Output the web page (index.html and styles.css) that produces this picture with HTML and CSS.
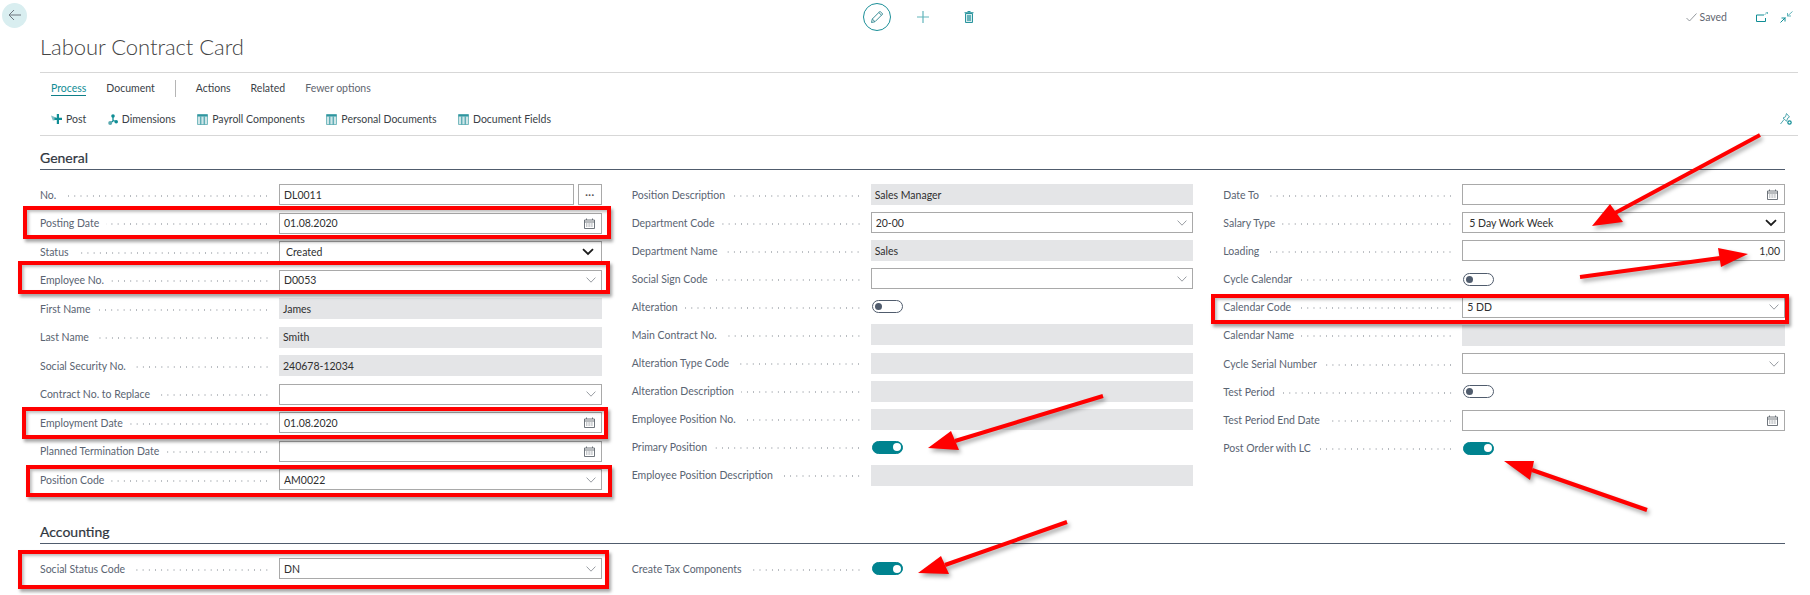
FILE: index.html
```html
<!DOCTYPE html>
<html lang="en">
<head>
  <meta charset="UTF-8">
  <title>Labour Contract Card</title>
  <link rel="stylesheet" href="styles.css">
</head>
<body>
  <!-- icon sprite -->
  <svg class="sprite" xmlns="http://www.w3.org/2000/svg">
    <symbol id="i-chevron" viewBox="0 0 10 6"><path d="M.6.6 5 5.200 9.400.6" fill="none" stroke="#8d9298" stroke-width=".9"/></symbol>
    <symbol id="i-select" viewBox="0 0 12 8"><path d="M1 1.200 6 6l5-4.800" fill="none" stroke="#1c1c1c" stroke-width="1.800"/></symbol>
    <symbol id="i-calendar" viewBox="0 0 11 11"><path d="M.5 2h10v8.500H.5zM.5 4h10M2.500.5V2M8.500.5V2" fill="none" stroke="#60666e" stroke-width=".9"/><path d="M2 6h7M2 8h7" stroke="#8d9298" stroke-width="1" stroke-dasharray="1 .6"/></symbol>
    <symbol id="i-table" viewBox="0 0 11 11"><path d="M.5.5h10v10H.5z" fill="#cfe6e8" stroke="#6db4ba" stroke-width=".9"/><path d="M.5 1.500h10" stroke="#2f96a0" stroke-width="2"/><path d="M3.800 2.500v8M7.200 2.500v8" stroke="#2f96a0" stroke-width="1"/></symbol>
    <symbol id="i-post" viewBox="0 0 11 10"><path d="M0 1.500 5 3.500v2.500L1.800 6.500z" fill="#7cbcc2"/><path d="M5.800 0h2.200v3.800H11V6H8v4H5.800V6H3.500V3.800h2.300z" fill="#0f8d95"/></symbol>
    <symbol id="i-dims" viewBox="0 0 10 11"><path d="M5 2v5L2.500 9M5 6.500 8.500 7.500" fill="none" stroke="#0f8d95" stroke-width="1.300"/><circle cx="5" cy="2" r="1.800" fill="#0f8d95"/><circle cx="2.200" cy="9" r="2" fill="#5aa9b0"/><circle cx="8.200" cy="7.800" r="1.800" fill="#0f8d95"/></symbol>
  </svg>

  <div class="page">
    <header class="topbar">
      <button class="back">
        <svg width="25" height="25" viewBox="0 0 25 25"><path d="M19 12H7M12 7l-5 5 5 5" fill="none" stroke="#6e767f" stroke-width="1"/></svg>
      </button>
      <div class="doc-actions">
        <span class="edit-btn">
          <svg width="14" height="14" viewBox="0 0 14 14"><path d="M1.500 12.500 2.300 9 10 1.300l2.700 2.700L5 11.700zM2.300 9 5 11.700M8.800 2.500l2.700 2.700" fill="none" stroke="#3a8d96" stroke-width="1"/></svg>
        </span>
        <svg class="new-btn" width="12" height="12" viewBox="0 0 12 12"><path d="M6 0v12M0 6h12" stroke="#62b5bb" stroke-width="1.200"/></svg>
        <svg class="del-btn" width="10" height="12" viewBox="0 0 10 12"><path d="M1.500 2.500h7V11.500h-7z" fill="#d6ecee" stroke="#2a959e"/><path d="M.5 1.700h9M3.500.5h3" stroke="#2a959e"/><path d="M4 4v6M6 4v6" stroke="#2a959e" stroke-width="1.300"/></svg>
      </div>
      <div class="status">
        <svg width="11" height="9" viewBox="0 0 11 9"><path d="M.5 5 3.500 8 10.500.5" fill="none" stroke="#7a8087" stroke-width=".8"/></svg>
        <span>Saved</span>
      </div>
      <svg class="popout" width="12" height="10" viewBox="0 0 12 10"><path d="M8 3H.5v6.500h9V6" fill="none" stroke="#0f8d95" stroke-width="1"/><path d="M8.500 3 11.500 0M9.500 0h2v2" fill="none" stroke="#62b5bb" stroke-width=".9"/></svg>
      <svg class="collapse" width="13" height="12" viewBox="0 0 13 12"><path d="M12.500.5 7.500 5M7.500 2v3h3.500" fill="none" stroke="#62b5bb" stroke-width="1"/><path d="M.5 11.500l5-5M1.500 7h3.500v3.500" fill="none" stroke="#0f8d95" stroke-width="1"/></svg>
    </header>

    <div class="content">
      <h1 class="title">Labour Contract Card</h1>

      <nav class="tabs">
        <a class="tab active">Process</a>
        <a class="tab">Document</a>
        <span class="tab-sep"></span>
        <a class="tab">Actions</a>
        <a class="tab">Related</a>
        <a class="tab muted">Fewer options</a>
      </nav>

      <div class="actions">
        <a class="action"><svg width="11" height="10"><use href="#i-post"/></svg>Post</a>
        <a class="action"><svg width="10" height="11"><use href="#i-dims"/></svg>Dimensions</a>
        <a class="action"><svg width="11" height="11"><use href="#i-table"/></svg>Payroll Components</a>
        <a class="action"><svg width="11" height="11"><use href="#i-table"/></svg>Personal Documents</a>
        <a class="action"><svg width="11" height="11"><use href="#i-table"/></svg>Document Fields</a>
        <svg class="pin" width="12" height="12" viewBox="0 0 12 12"><path d="M6.500.5 9.500 4 7.800 5 6.500 8.200 3 5 5.500 3.800zM4 6.500.5 11" fill="none" stroke="#3f9fa8" stroke-width=".9"/><circle cx="9.500" cy="9.500" r="1.700" fill="none" stroke="#0f8d95" stroke-width="1.200"/></svg>
      </div>

      <section class="section">
        <h2 class="section-title">General</h2>
        <div class="columns">
          <div class="col col-a">
            <div class="row"><div class="label"><span>No.</span><i></i></div><div class="field-group"><div class="value">DL0011</div><div class="more">···</div></div></div>
            <div class="row"><div class="label"><span>Posting Date</span><i></i></div><div class="value">01.08.2020<svg class="cal"><use href="#i-calendar"/></svg></div></div>
            <div class="row"><div class="label"><span>Status</span><i></i></div><div class="value pick">Created<svg class="sel"><use href="#i-select"/></svg></div></div>
            <div class="row"><div class="label"><span>Employee No.</span><i></i></div><div class="value">D0053<svg class="chev"><use href="#i-chevron"/></svg></div></div>
            <div class="row"><div class="label"><span>First Name</span><i></i></div><div class="value ro">James</div></div>
            <div class="row"><div class="label"><span>Last Name</span><i></i></div><div class="value ro">Smith</div></div>
            <div class="row"><div class="label"><span>Social Security No.</span><i></i></div><div class="value ro">240678-12034</div></div>
            <div class="row"><div class="label"><span>Contract No. to Replace</span><i></i></div><div class="value"><svg class="chev"><use href="#i-chevron"/></svg></div></div>
            <div class="row"><div class="label"><span>Employment Date</span><i></i></div><div class="value">01.08.2020<svg class="cal"><use href="#i-calendar"/></svg></div></div>
            <div class="row"><div class="label"><span>Planned Termination Date</span><i></i></div><div class="value"><svg class="cal"><use href="#i-calendar"/></svg></div></div>
            <div class="row"><div class="label"><span>Position Code</span><i></i></div><div class="value">AM0022<svg class="chev"><use href="#i-chevron"/></svg></div></div>
          </div>
          <div class="col col-b">
            <div class="row"><div class="label"><span>Position Description</span><i></i></div><div class="value ro">Sales Manager</div></div>
            <div class="row"><div class="label"><span>Department Code</span><i></i></div><div class="value">20-00<svg class="chev"><use href="#i-chevron"/></svg></div></div>
            <div class="row"><div class="label"><span>Department Name</span><i></i></div><div class="value ro">Sales</div></div>
            <div class="row"><div class="label"><span>Social Sign Code</span><i></i></div><div class="value"><svg class="chev"><use href="#i-chevron"/></svg></div></div>
            <div class="row"><div class="label"><span>Alteration</span><i></i></div><div class="switch"></div></div>
            <div class="row"><div class="label"><span>Main Contract No.</span><i></i></div><div class="value ro"></div></div>
            <div class="row"><div class="label"><span>Alteration Type Code</span><i></i></div><div class="value ro"></div></div>
            <div class="row"><div class="label"><span>Alteration Description</span><i></i></div><div class="value ro"></div></div>
            <div class="row"><div class="label"><span>Employee Position No.</span><i></i></div><div class="value ro"></div></div>
            <div class="row"><div class="label"><span>Primary Position</span><i></i></div><div class="switch on"></div></div>
            <div class="row"><div class="label"><span>Employee Position Description</span><i></i></div><div class="value ro"></div></div>
          </div>
          <div class="col col-c">
            <div class="row"><div class="label"><span>Date To</span><i></i></div><div class="value"><svg class="cal"><use href="#i-calendar"/></svg></div></div>
            <div class="row"><div class="label"><span>Salary Type</span><i></i></div><div class="value pick">5 Day Work Week<svg class="sel"><use href="#i-select"/></svg></div></div>
            <div class="row"><div class="label"><span>Loading</span><i></i></div><div class="value num">1,00</div></div>
            <div class="row"><div class="label"><span>Cycle Calendar</span><i></i></div><div class="switch"></div></div>
            <div class="row"><div class="label"><span>Calendar Code</span><i></i></div><div class="value">5 DD<svg class="chev"><use href="#i-chevron"/></svg></div></div>
            <div class="row"><div class="label"><span>Calendar Name</span><i></i></div><div class="value ro"></div></div>
            <div class="row"><div class="label"><span>Cycle Serial Number</span><i></i></div><div class="value"><svg class="chev"><use href="#i-chevron"/></svg></div></div>
            <div class="row"><div class="label"><span>Test Period</span><i></i></div><div class="switch"></div></div>
            <div class="row"><div class="label"><span>Test Period End Date</span><i></i></div><div class="value"><svg class="cal"><use href="#i-calendar"/></svg></div></div>
            <div class="row"><div class="label"><span>Post Order with LC</span><i></i></div><div class="switch on"></div></div>
          </div>
        </div>
      </section>

      <section class="section accounting">
        <h2 class="section-title">Accounting</h2>
        <div class="columns">
          <div class="col col-a">
            <div class="row"><div class="label"><span>Social Status Code</span><i></i></div><div class="value">DN<svg class="chev"><use href="#i-chevron"/></svg></div></div>
          </div>
          <div class="col col-b">
            <div class="row"><div class="label"><span>Create Tax Components</span><i></i></div><div class="switch on"></div></div>
          </div>
        </div>
      </section>
    </div>

    <!-- annotations drawn on top of the screenshot -->
    <div class="mark mark-posting"></div>
    <div class="mark mark-employee"></div>
    <div class="mark mark-employment"></div>
    <div class="mark mark-position"></div>
    <div class="mark mark-social"></div>
    <div class="mark mark-calendar"></div>

    <svg class="arrows" width="1810" height="595" viewBox="0 0 1810 595">
      <path d="M1760 135 1615 213" class="shaft"/>
      <path d="M1592 226 1610 204 1623 222z"/>
      <path d="M1580 277 1720 258" class="shaft"/>
      <path d="M1748 254 1718 248 1721 267z"/>
      <path d="M1103 396 955 441" class="shaft"/>
      <path d="M928 448 951 431 959 450z"/>
      <path d="M1067 522 945 565" class="shaft"/>
      <path d="M918 573 941 556 949 574z"/>
      <path d="M1647 510 1532 470" class="shaft"/>
      <path d="M1504 461 1534 461 1530 480z"/>
    </svg>
  </div>
</body>
</html>
```

FILE: styles.css
```css
* {
  box-sizing: border-box;
}

body {
  margin: 0;
  background-color: #fff;
  font-family: "Lato", "Open Sans", sans-serif;
  font-size: 10.5px;
  color: #3a3f47;
}

.sprite {
  display: none;
}

.page {
  position: relative;
  width: 1810px;
  height: 595px;
  overflow: hidden;
}

/* top bar */
.topbar {
  display: flex;
  align-items: center;
  height: 34px;
}

.back {
  width: 25px;
  height: 25px;
  margin: -3px 0 0 2px;
  padding: 0;
  border: none;
  border-radius: 50%;
  background-color: #d9eef0;
}

.back svg {
  display: block;
}

.doc-actions {
  display: flex;
  align-items: center;
  margin-left: 836px;
}

.edit-btn {
  display: flex;
  align-items: center;
  justify-content: center;
  width: 28px;
  height: 28px;
  border: 1px solid #1b8f98;
  border-radius: 50%;
}

.new-btn {
  margin-left: 26px;
}

.del-btn {
  margin-left: 35px;
}

.status {
  display: flex;
  align-items: center;
  gap: 3px;
  margin-left: auto;
  color: #5f6670;
}

.popout {
  margin-left: 29px;
}

.collapse {
  margin: 0 17px 0 12px;
}

/* title, tabs, actions */
.content {
  margin: 0 12px 0 40px;
}

.title {
  height: 39px;
  margin: 0;
  padding-top: 1px;
  border-bottom: 1px solid #d7d7d7;
  font-size: 22px;
  font-weight: 300;
  line-height: 24px;
  letter-spacing: -.05px;
  color: #444;
}

.tabs {
  display: flex;
  align-items: center;
  gap: 20px;
  height: 30px;
  padding-left: 11px;
}

.tab {
  display: block;
  height: 16px;
  line-height: 16px;
}

.tab.active {
  color: #0f8d95;
  border-bottom: 1px solid #0f7f88;
}

.tab.muted {
  color: #5f6670;
}

.tab-sep {
  width: 1px;
  height: 17px;
  background-color: #b5b5b5;
}

.actions {
  display: flex;
  align-items: center;
  gap: 21.500px;
  height: 33px;
  padding-left: 11px;
  border-bottom: 1px solid #d7d7d7;
}

.action {
  display: flex;
  align-items: center;
  gap: 4px;
}

.pin {
  margin-left: auto;
  margin-right: 6px;
}

/* sections */
.section {
  width: 1745px;
}

.section-title {
  height: 34px;
  margin: 0;
  padding-top: 13px;
  border-bottom: 1px solid #505c6d;
  font-size: 14px;
  font-weight: 400;
  line-height: 18px;
  color: #2f3640;
  -webkit-text-stroke: .2px #2f3640;
}

.columns {
  display: grid;
  grid-template-columns: repeat(3, 1fr);
  column-gap: 30px;
  padding-top: 14px;
}

.accounting {
  margin-top: 12.500px;
}

.col {
  display: grid;
  align-content: start;
}

.col-a {
  grid-auto-rows: 28.5px;
}

.col-b {
  grid-auto-rows: 28.1px;
}

.col-c {
  grid-auto-rows: 28.2px;
}

/* rows */
.row {
  display: grid;
  grid-template-columns: 239px 1fr;
  align-items: start;
}

.label {
  display: flex;
  align-items: center;
  gap: 7px;
  height: 21px;
  margin-right: 9px;
  color: #5a6472;
  white-space: nowrap;
}

.label i {
  flex: 1;
  height: 2px;
  margin-top: 2px;
  background-image: radial-gradient(circle, #b4b8bd 0.7px, transparent 0.8px);
  background-size: 6.200px 2px;
  background-position: right;
}

.value {
  display: flex;
  align-items: center;
  height: 21px;
  padding: 0 4px;
  border: 1px solid #a9a9a9;
  background-color: #fff;
  color: #2f2f2f;
}

.value.ro {
  padding-left: 3px;
  border-color: #e4e5e7;
  background-color: #e4e5e7;
}

.value.pick {
  padding-left: 6px;
}

.value.num {
  justify-content: flex-end;
}

.value svg {
  flex: none;
  margin-left: auto;
}

.field-group {
  display: flex;
  gap: 4px;
}

.field-group .value {
  flex: 1;
}

.more {
  width: 24px;
  height: 21px;
  border: 1px solid #a9a9a9;
  text-align: center;
  font-size: 12px;
  line-height: 19px;
  color: #555;
}

.cal {
  width: 11px;
  height: 11px;
  margin-right: 2px;
}

.chev {
  width: 10px;
  height: 6px;
  margin-right: 1px;
}

.sel {
  width: 12px;
  height: 8px;
  margin-right: 3px;
}

/* switches */
.switch {
  position: relative;
  width: 31px;
  height: 13px;
  margin: 4px 0 0 1px;
  border: 1px solid #505c6d;
  border-radius: 7px;
}

.switch::after {
  content: "";
  position: absolute;
  top: 2px;
  left: 2px;
  width: 7px;
  height: 7px;
  border-radius: 50%;
  background-color: #505c6d;
}

.switch.on {
  border-color: #00838f;
  background-color: #00838f;
}

.switch.on::after {
  left: 20px;
  width: 8px;
  height: 8px;
  top: 1.500px;
  background-color: #fff;
}

/* red annotation boxes */
.mark {
  position: absolute;
  border: 4px solid #f00;
  box-shadow: 2px 3px 3px rgba(0, 0, 0, .35), inset 2px 2px 3px rgba(0, 0, 0, .25);
}

.mark-posting {
  left: 23px;
  top: 206px;
  width: 588px;
  height: 33px;
}

.mark-employee {
  left: 18px;
  top: 261px;
  width: 592px;
  height: 33px;
}

.mark-employment {
  left: 22px;
  top: 407px;
  width: 586px;
  height: 32px;
}

.mark-position {
  left: 26px;
  top: 465px;
  width: 586px;
  height: 32px;
}

.mark-social {
  left: 18px;
  top: 550px;
  width: 591px;
  height: 39px;
}

.mark-calendar {
  left: 1211px;
  top: 294px;
  width: 578px;
  height: 30px;
}

.arrows {
  position: absolute;
  top: 0;
  left: 0;
  fill: #f00;
  filter: drop-shadow(2px 3px 2px rgba(0, 0, 0, .35));
}

.arrows .shaft {
  fill: none;
  stroke: #f00;
  stroke-width: 4;
}
```
